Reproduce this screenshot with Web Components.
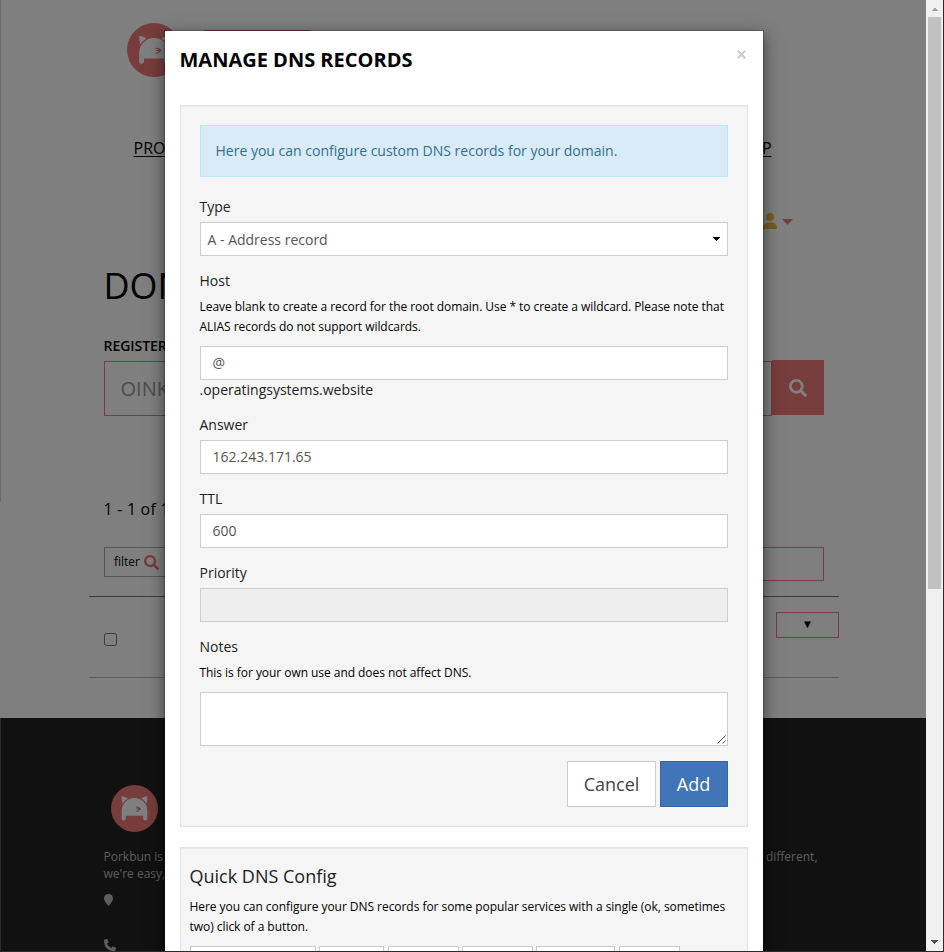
<!DOCTYPE html>
<html lang="en">
<head>
<meta charset="utf-8">
<title>Manage DNS Records</title>
<style>
html,body{margin:0;height:100%;overflow:hidden}
body{font-family:"Open Sans","Noto Sans",sans-serif;font-size:14px;line-height:20px;color:#222;background:#2b2b2b}
</style>
</head>
<body>
<app-window>
  <site-page></site-page>
  <modal-dialog slot="overlay" heading="MANAGE DNS RECORDS">
    <well-panel>
      <info-alert>Here you can configure custom DNS records for your domain.</info-alert>
      <form-field label="Type" kind="select" value="A - Address record"></form-field>
      <form-field label="Host" value="@" suffix=".operatingsystems.website"><span slot="help">Leave blank to create a record for the root domain. Use * to create a wildcard. Please note that ALIAS records do not support wildcards.</span></form-field>
      <form-field label="Answer" value="162.243.171.65"></form-field>
      <form-field label="TTL" value="600"></form-field>
      <form-field label="Priority" kind="disabled"></form-field>
      <form-field label="Notes" kind="area"><span slot="help">This is for your own use and does not affect DNS.</span></form-field>
      <action-bar></action-bar>
    </well-panel>
    <well-panel small><quick-config></quick-config></well-panel>
  </modal-dialog>
</app-window>
<script>
function define(name, render){
  customElements.define(name, class extends HTMLElement{
    constructor(){ super(); this.attachShadow({mode:'open'}); }
    connectedCallback(){ this.shadowRoot.innerHTML = '<style>*{box-sizing:border-box}:host{display:block;box-sizing:border-box}</style>' + render(this); }
  });
}

define('app-window', () => `<style>
:host{display:grid;grid-template-columns:925px 17px;width:944px;height:952px;padding:0 1px 1px;background:linear-gradient(to right,#6c6c6c 1px,#2b2b2b 1px) 0 0/100% 502px no-repeat,linear-gradient(to right,#808080 1px,#2b2b2b 1px) 0 502px/100% 216px no-repeat,#2b2b2b;overflow:hidden}
.view{position:relative;height:951px;overflow:hidden;background:#fff}
.shade{position:absolute;inset:0;background:rgba(0,0,0,.5)}
</style><div class="view"><slot></slot><div class="shade"></div><slot name="overlay"></slot></div><scroll-bar></scroll-bar>`);

define('scroll-bar', () => `<style>
:host{display:flex;flex-direction:column;align-items:center;height:951px;background:#f0f0f0}
svg{display:block;width:17px;height:17px}
.thumb{width:13px;height:572px;background:#c1c1c1}
.rest{flex:1}
</style><svg viewBox="0 0 17 17" shape-rendering="crispEdges"><path d="M5 11h7L8.5 7.500z" fill="#a3a3a3"/></svg><div class="thumb"></div><div class="rest"></div><svg viewBox="0 0 17 17" shape-rendering="crispEdges"><path d="M5 6h7L8.500 10z" fill="#505050"/></svg>`);

define('pig-logo', () => `<style>:host{flex:none}svg{display:block;width:100%;height:100%}</style>
<svg viewBox="0 0 54 54"><circle cx="27" cy="27" r="27" fill="#ee7878"/>
<path fill="#fff" d="M12.300 13Q17 13 19.800 16L13.300 21.500Q11.800 17 12.300 13zM41.700 13Q37 13 34.200 16L40.700 21.500Q42.200 17 41.700 13z"/>
<path fill="#fff" stroke="#ee7878" stroke-width="1.200" d="M11.600 38.500V30A15.400 15.700 0 0 1 42.400 30V38.500A3 3 0 0 1 36.400 38.500V36H17.600V38.500A3 3 0 0 1 11.600 38.500z"/>
<path fill="none" stroke="#ee7878" stroke-width="1.200" d="M28.500 25.500q3-1 3.500 2t-3 2.500M29 27.500h3M31.500 25.700l2.300 1.800-2.300 1.800"/></svg>`);

const icons = {
  search:['0 0 512 512','M505 442.700 405.300 343c-4.500-4.500-10.600-7-17-7H372c27.600-35.300 44-79.700 44-128C416 93.100 322.900 0 208 0S0 93.100 0 208s93.100 208 208 208c48.300 0 92.700-16.400 128-44v16.300c0 6.400 2.500 12.500 7 17l99.700 99.700c9.400 9.400 24.600 9.400 33.900 0l28.300-28.300c9.400-9.400 9.400-24.600.1-34zM208 336c-70.700 0-128-57.200-128-128 0-70.700 57.200-128 128-128 70.700 0 128 57.200 128 128 0 70.700-57.200 128-128 128z'],
  user:['0 0 14 16','M7 0a4 4 0 1 1 0 8 4 4 0 0 1 0-8zM0 16v-2Q1 10 5 9.500h4Q13 10 14 14v2z'],
  caret:['0 0 11 6','M0 0h11L5.500 6z'],
  pin:['0 0 9 12','M4.500 12Q0 7 0 4.500a4.500 4.500 0 0 1 9 0Q9 7 4.500 12z'],
  phone:['0 0 512 512','M18 25 122 1q17-3 24 13l48 112q6 14-6 25l-61 50q58 126 184 184l50-61q10-12 25-6l112 48q16 7 13 24l-24 104q-4 18-23 18Q0 512 0 48q0-19 18-23z']
};
define('ui-icon', el => { const i = icons[el.getAttribute('name')];
  return `<style>:host{flex:none}svg{display:block;width:100%;height:100%}</style><svg viewBox="${i[0]}" preserveAspectRatio="none"><path fill="currentColor" d="${i[1]}"/></svg>`; });

define('site-page', () => `<style>
:host{height:951px;color:#000;white-space:nowrap}
.box{width:750px;height:718px;margin-left:87.500px;padding:0 15px}
.row{display:flex;justify-content:space-between}
.brand{height:112px;padding:23px 0 0 23px;justify-content:flex-start}
.brand pig-logo{width:54px;height:54px}
.word{width:107px;height:30px;margin:7px 0 0 23px;background:#ee7878}
.nav{height:72px;padding:24px 52px 0 30px;font-size:16px;line-height:24px}
.nav span{text-decoration:underline;text-underline-offset:2px}
.acct{height:81px;justify-content:flex-end;padding:29px 31px 0 0;color:#f0b840}
.acct ui-icon{width:14px;height:16px}
.acct .c{width:11px;height:6px;margin:6px 0 0 5px;color:#ee7878}
h1{margin:0;height:71px;font-weight:400;font-size:36px;line-height:42px}
.lab{height:24px;font-size:14px;font-weight:600;letter-spacing:-.05px;line-height:20px}
.find{height:136px;align-items:flex-start}
.find .in{width:669px;height:55px;margin-top:1px;border:1px solid #ee7878;padding:0 16px;font-size:20px;line-height:53px;color:#999}
.find .go{width:51.500px;height:55px;background:#ee7878;color:#fff;display:flex;justify-content:center;align-items:center}
.go ui-icon{width:18px;height:18px}
.count{font-size:16px;line-height:24px;height:51px;padding-top:1px;letter-spacing:.2px}
.filters{height:49px;align-items:flex-start}
.filters .f{display:flex;align-items:center;gap:4px;width:66px;height:30px;border:1px solid #aaa;padding-left:9.500px;font-size:12px}
.f ui-icon{width:15px;height:15px;color:#ee7878}
.filters .q{width:200px;height:34px;border:1px solid #ee7878}
.list{margin:0 -15px;height:82px;border-top:1px solid #777;border-bottom:1px solid #bbb;padding:15px 0 0 15px;align-items:flex-start}
.cb{width:13px;height:13px;margin-top:21px;border:1px solid #767676;border-radius:2.500px}
.dd{width:63px;height:26px;border:1px solid #ee7878;display:flex;align-items:center;justify-content:center;font-size:11.500px;line-height:16px;padding:0 0 2px 1px}
.foot{height:233px;background:#222;padding:67px 0 0 102.500px;color:#bbb;font-size:12px;line-height:17px}
.foot pig-logo{width:47px;height:47px;margin-left:7px}
.foot .t{width:714px;padding-top:16px;align-items:flex-start}
.foot .p{width:9px;height:12px;margin-top:12px}
.foot .h{width:12px;height:12px;margin-top:33px}
</style>
<div class="box">
<div class="row brand"><pig-logo></pig-logo><div class="word"></div></div>
<div class="row nav"><span>PRO</span><span>P</span></div>
<div class="row acct"><ui-icon name="user"></ui-icon><ui-icon class="c" name="caret"></ui-icon></div>
<h1>DOM</h1>
<div class="lab">REGISTER</div>
<div class="row find"><div class="in">OINK</div><div class="go"><ui-icon name="search"></ui-icon></div></div>
<div class="count">1 - 1 of 1</div>
<div class="row filters"><div class="f">filter<ui-icon name="search"></ui-icon></div><div class="q"></div></div>
<div class="row list"><div class="cb"></div><div class="dd">▼</div></div>
</div>
<div class="foot"><pig-logo></pig-logo>
<div class="row t"><span>Porkbun is<br>we're easy,</span><span>different,</span></div>
<ui-icon class="p" name="pin"></ui-icon><ui-icon class="h" name="phone"></ui-icon></div>`);

define('modal-dialog', el => `<style>
:host{position:absolute;left:162.500px;top:30px;width:600px;height:1200px;background:#fff;background-clip:padding-box;border:1px solid rgba(0,0,0,.2);box-shadow:0 5px 15px rgba(0,0,0,.5);padding:0 15px}
header{display:flex;justify-content:space-between;height:74px;padding-top:15px}
h2{margin:0;font-size:20px;line-height:28px;font-weight:700;color:#000}
svg{width:9px;height:9px;margin:4px 1.500px 0 0}
</style><header><h2>${el.getAttribute('heading')}</h2><svg viewBox="0 0 9 9"><path d="M.8.8l7.400 7.400M8.200.8.800 8.200" stroke="#ccc" stroke-width="2"/></svg></header><slot></slot>`);

define('well-panel', () => `<style>
:host{padding:19px;margin-bottom:20px;background:#f5f5f5;border:1px solid #e3e3e3;box-shadow:inset 0 1px 1px rgba(0,0,0,.05)}
:host([small]){padding:9px;height:400px}
</style><slot></slot>`);

define('info-alert', () => `<style>
:host{height:52px;padding:15px;margin-bottom:20px;background:#d9ebf7;border:1px solid #bce8f1;color:#31708f}
</style><slot></slot>`);

define('form-field', el => { const k = el.getAttribute('kind') || 'text', s = el.getAttribute('suffix');
  const help = el.querySelector('[slot=help]');
  return `<style>
:host{margin-bottom:15px}
label{display:block;margin-bottom:5px}
.help{font-size:12px;line-height:20px;padding-top:1px;margin-bottom:9px;color:#000;letter-spacing:-.05px}
.ctl{display:flex;justify-content:space-between;align-items:center;height:34px;border:1px solid #ccc;background:#fff;padding:0 12px;color:#555}
.select{padding:0 7px}
.select span{padding-top:2px}
.disabled{background:#eee}
.area{height:54px;padding:0;align-items:flex-end;justify-content:flex-end}
svg{display:block}
</style><label>${el.getAttribute('label')}</label>${help ? '<div class="help"><slot name="help"></slot></div>' : ''}
<div class="ctl ${k}"><span>${el.getAttribute('value') || ''}</span>${
  k === 'select' ? '<svg width="7" height="4" viewBox="0 0 7 4" shape-rendering="crispEdges"><path d="M0 0h7v1H6v1H5v1H4v1H3V3H2V2H1V1H0z" fill="#000"/></svg>' :
  k === 'area' ? '<svg width="10" height="10" viewBox="0 0 10 10"><path d="M.5 8.500l8-8M5.500 8.500l3-3" stroke="#555" stroke-width="1"/></svg>' : ''}</div>
${s ? `<div>${s}</div>` : ''}`; });

define('action-bar', () => `<style>
:host{display:flex;justify-content:flex-end;gap:4px;font-size:18px}
button{font:inherit;height:46px;width:89px;padding:0 0 0 1px;border:1px solid #ccc;background:#fff;color:#444}
.add{width:68px;padding:0;background:#4274b8;border-color:#3767a8;color:#fff}
</style><button>Cancel</button><button class="add">Add</button>`);

define('quick-config', () => `<style>
h4{margin:9px 0 10px;font-size:18px;line-height:20px;font-weight:400}
p{margin:0;padding:1px 0 9px;font-size:12px;color:#000;letter-spacing:-.045px}
div{display:flex}
i{height:30px;border:1px solid #ccc;background:#fff}
</style><h4>Quick DNS Config</h4><p>Here you can configure your DNS records for some popular services with a single (ok, sometimes two) click of a button.</p>
<div>${[[126,3],[65,4],[71,3],[71,3],[79,4],[61,0]].map(b => `<i style="width:${b[0]}px;margin-right:${b[1]}px"></i>`).join('')}</div>`);
</script>
</body>
</html>
